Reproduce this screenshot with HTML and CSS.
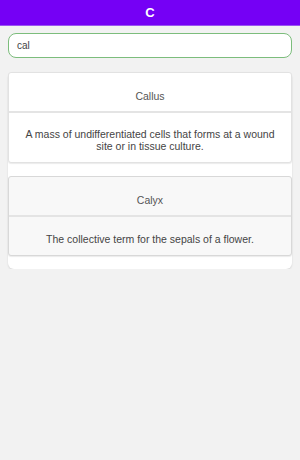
FILE: index.html
```html
<!DOCTYPE html>
<html>
<head>
<meta charset="utf-8">
<link rel="stylesheet" href="styles.css">
</head>
<body>
<header class="topbar">C</header>
<div class="search-wrap">
  <div class="search">cal</div>
</div>
<div class="list">
  <div class="card">
    <div class="card-head">Callus</div>
    <div class="card-body">A mass of undifferentiated cells that forms at a wound site or in tissue culture.</div>
  </div>
  <div class="card alt">
    <div class="card-head">Calyx</div>
    <div class="card-body">The collective term for the sepals of a flower.</div>
  </div>
</div>
</body>
</html>
```
FILE: styles.css
```css
html, body {
  margin: 0;
  padding: 0;
  background: #f2f2f2;
  font-family: "Liberation Sans", Arial, sans-serif;
  color: #333;
}
.topbar {
  height: 25px;
  background: #7500f5;
  border-bottom: 1px solid #9a55f0;
  color: #fff;
  font-weight: bold;
  font-size: 13px;
  line-height: 25px;
  text-align: center;
}
.search-wrap {
  padding: 7px 8px 14px 8px;
}
.search {
  height: 23px;
  border: 1px solid #7cbd7c;
  border-radius: 8px;
  background: #fff;
  padding: 0 8px;
  font-size: 10px;
  line-height: 23px;
  color: #444;
}
.list {
  margin: 0 8px;
  background: #fff;
  border-radius: 6px;
  padding-bottom: 13px;
  box-shadow: 0 1px 2px rgba(0,0,0,0.12);
}
.card {
  background: #fff;
  border: 1px solid #e2e2e2;
  border-radius: 3px;
  margin-bottom: 13px;
  box-shadow: 0 1px 1px rgba(0,0,0,0.08);
}
.card:last-child {
  margin-bottom: 0;
}
.card.alt {
  background: #f8f8f8;
  border-color: #d8d8d8;
}
.card-head {
  padding: 16px 10px 7px;
  font-size: 10.5px;
  line-height: 15px;
  text-align: center;
  color: #555;
  border-bottom: 2px solid #e4e4e4;
}
.card-body {
  padding: 15px 8px 10px;
  font-size: 10.5px;
  line-height: 12px;
  text-align: center;
  color: #444;
}
.card.alt .card-body {
  line-height: 15px;
  padding: 15px 8px 8px;
}
```
